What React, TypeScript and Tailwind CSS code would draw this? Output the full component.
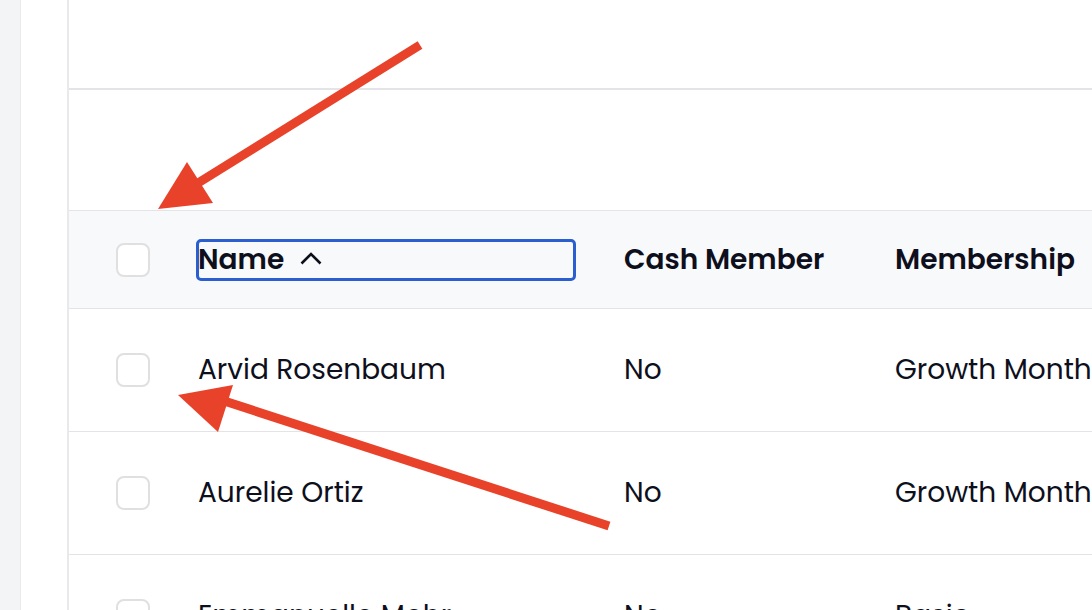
const rows = [
  { name: 'Arvid Rosenbaum', cash: 'No', plan: 'Growth Monthly' },
  { name: 'Aurelie Ortiz', cash: 'No', plan: 'Growth Monthly' },
  { name: 'Emmanuelle Mohr', cash: 'No', plan: 'Basic' },
]

function Box() {
  return <div className="w-[34px] h-[34px] rounded-[8px] border-2 border-[#e0e0e0] bg-white" />
}

export default function App() {
  return (
    <div
      className="relative flex h-[610px] w-[1092px] overflow-hidden bg-white text-[#0e0f1c]"
      style={{ fontFamily: 'Poppins, Inter, "Noto Sans", sans-serif' }}
    >
      <div className="w-[21px] shrink-0 bg-[#f3f4f6] border-r border-[#ebebed]" />
      <div className="w-[46px] shrink-0 bg-white" />
      <div className="flex-1 flex flex-col border-l-2 border-[#e9e9ec] min-w-0">
        <div className="h-[90px] shrink-0 border-b-2 border-[#e4e4e8]" />
        <div className="h-[120px] shrink-0" />
        <div className="border-t border-[#e4e4e8]">
          <div className="grid grid-cols-[127px_428px_271px_1fr] items-center h-[98px] bg-[#f8f9fb] border-b border-[#e4e4e8] text-[28px] font-semibold whitespace-nowrap overflow-hidden">
            <div className="pl-[47px]"><Box /></div>
            <div>
              <div className="flex items-center gap-[16px] w-[380px] h-[42px] rounded-[5px] border-[3px] border-[#2b5fcf] leading-none">
                <span className="-ml-[1px]">Name</span>
                <svg width="22" height="13" viewBox="0 0 22 13" className="-mt-[3px]">
                  <polyline points="1.5,11.5 11,2 20.5,11.5" fill="none" stroke="currentColor" strokeWidth="2.6" />
                </svg>
              </div>
            </div>
            <div>Cash Member</div>
            <div>Membership</div>
          </div>
          {rows.map((r) => (
            <div
              key={r.name}
              className="grid grid-cols-[127px_428px_271px_1fr] items-center h-[123px] border-b border-[#e4e4e8] text-[28px] whitespace-nowrap overflow-hidden"
            >
              <div className="pl-[47px]"><Box /></div>
              <div className="pl-[2px]">{r.name}</div>
              <div>{r.cash}</div>
              <div>{r.plan}</div>
            </div>
          ))}
        </div>
      </div>

      <svg className="absolute inset-0 pointer-events-none" width="1092" height="610">
        <line x1="420" y1="45" x2="190" y2="188" stroke="#e8432a" strokeWidth="9" />
        <polygon points="158,209 187,162 213,203" fill="#e8432a" />
        <line x1="609" y1="526" x2="215" y2="398" stroke="#e8432a" strokeWidth="9" />
        <polygon points="178,395 233,385 218,432" fill="#e8432a" />
      </svg>
    </div>
  )
}
